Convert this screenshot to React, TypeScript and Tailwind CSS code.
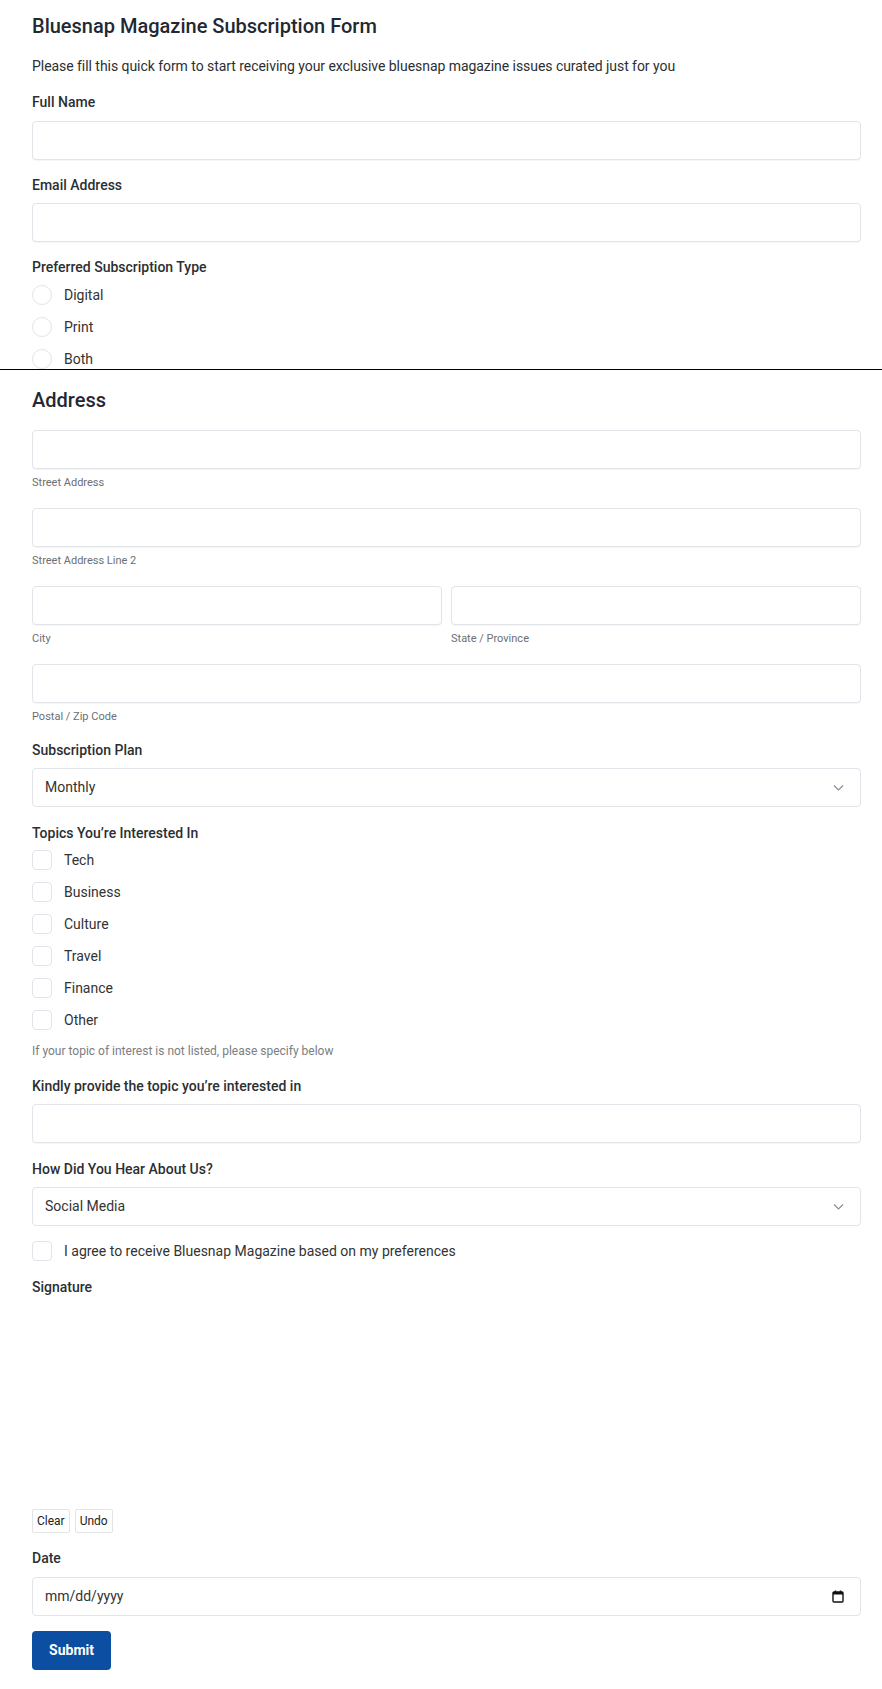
import { useState } from 'react';

const font = { fontFamily: 'Roboto, "Liberation Sans", sans-serif' };

const Label = ({ children, className = '' }: { children: React.ReactNode; className?: string }) => (
  <p className={`text-[14px] leading-5 font-medium text-[#2b2f33] ${className}`}>{children}</p>
);

const TextBox = ({ className = '' }: { className?: string }) => (
  <input
    type="text"
    className={`block w-full h-[39px] rounded-[4px] border border-[#e1e4e8] bg-white px-3 text-[14px] text-[#333] shadow-[0_1px_1px_rgba(0,0,0,0.04)] outline-none ${className}`}
  />
);

const Caption = ({ children }: { children: React.ReactNode }) => (
  <p className="mt-[6px] text-[11px] leading-4 text-[#6b6f73]">{children}</p>
);

const Chevron = () => (
  <svg className="pointer-events-none absolute right-[17px] top-1/2 -translate-y-1/2" width="11" height="7" viewBox="0 0 11 7" fill="none">
    <path d="M1 1l4.5 4.5L10 1" stroke="#8a8f94" strokeWidth="1.2" />
  </svg>
);

const SelectBox = ({ value, options }: { value: string; options: string[] }) => {
  const [v, setV] = useState(value);
  return (
    <div className="relative">
      <select
        value={v}
        onChange={(e) => setV(e.target.value)}
        className="block w-full h-[39px] appearance-none rounded-[4px] border border-[#e1e4e8] bg-white pl-3 pr-8 text-[14px] text-[#333] outline-none"
      >
        {options.map((o) => (
          <option key={o}>{o}</option>
        ))}
      </select>
      <Chevron />
    </div>
  );
};

const Radio = ({ label }: { label: string }) => (
  <label className="flex h-8 items-center gap-3 text-[14px] text-[#333]">
    <span className="h-5 w-5 rounded-full border border-[#e1e4e8] bg-white" />
    {label}
  </label>
);

const Check = ({ label }: { label: string }) => (
  <label className="flex h-8 items-center gap-3 text-[14px] text-[#333]">
    <span className="h-5 w-5 rounded-[4px] border border-[#e1e4e8] bg-white" />
    {label}
  </label>
);

export default function App() {
  return (
    <div className="bg-white pl-8 pr-[21px] pb-[19px] text-[#333]" style={font}>
      {/* Top section, cut off at the divider */}
      <div className="relative -ml-8 -mr-[21px] h-[370px] overflow-hidden border-b border-black pl-8 pr-[21px]">
        <h1 className="pt-3 text-[20px] leading-7 font-medium text-[#1f2933]">
          Bluesnap Magazine Subscription Form
        </h1>
        <p className="mt-4 text-[14px] leading-5 tracking-[-0.05px] text-[#2b2f33]">
          Please fill this quick form to start receiving your exclusive bluesnap magazine issues curated just for you
        </p>

        <Label className="mt-4 mb-[9px]">Full Name</Label>
        <TextBox />

        <Label className="mt-[15px] mb-2">Email Address</Label>
        <TextBox />

        <Label className="mt-[15px]">Preferred Subscription Type</Label>
        <div className="mt-[2px]">
          <Radio label="Digital" />
          <Radio label="Print" />
          <Radio label="Both" />
        </div>
      </div>

      {/* Address */}
      <h2 className="mt-4 text-[20px] leading-7 font-medium text-[#1f2933]">Address</h2>
      <div className="mt-4">
        <TextBox />
        <Caption>Street Address</Caption>
      </div>
      <div className="mt-[17px]">
        <TextBox />
        <Caption>Street Address Line 2</Caption>
      </div>
      <div className="mt-[17px] grid grid-cols-2 gap-[9px]">
        <div>
          <TextBox />
          <Caption>City</Caption>
        </div>
        <div>
          <TextBox />
          <Caption>State / Province</Caption>
        </div>
      </div>
      <div className="mt-[17px]">
        <TextBox />
        <Caption>Postal / Zip Code</Caption>
      </div>

      <Label className="mt-[15px] mb-2">Subscription Plan</Label>
      <SelectBox value="Monthly" options={['Monthly', 'Quarterly', 'Yearly']} />

      <Label className="mt-4">Topics You’re Interested In</Label>
      <div className="mt-px">
        {['Tech', 'Business', 'Culture', 'Travel', 'Finance', 'Other'].map((t) => (
          <Check key={t} label={t} />
        ))}
      </div>
      <p className="mt-[7px] text-[12px] leading-4 text-[#7a7e82]">
        If your topic of interest is not listed, please specify below
      </p>

      <Label className="mt-[17px] mb-2">Kindly provide the topic you’re interested in</Label>
      <TextBox />

      <Label className="mt-4 mb-2">How Did You Hear About Us?</Label>
      <SelectBox value="Social Media" options={['Social Media', 'Friend', 'Search Engine', 'Other']} />

      <div className="mt-[9px]">
        <Check label="I agree to receive Bluesnap Magazine based on my preferences" />
      </div>

      <Label className="mt-[10px]">Signature</Label>
      <div className="h-[212px]" />
      <div className="flex gap-[5px]">
        <button className="h-6 rounded-[2px] border border-[#e1e4e8] bg-white px-[4px] text-[12px] font-normal text-[#222]">
          Clear
        </button>
        <button className="h-6 rounded-[2px] border border-[#e1e4e8] bg-white px-[4px] text-[12px] font-normal text-[#222]">
          Undo
        </button>
      </div>

      <Label className="mt-[15px] mb-[9px]">Date</Label>
      <div className="flex h-[39px] items-center justify-between rounded-[4px] border border-[#e1e4e8] bg-white pl-3 pr-4 text-[14px] text-[#333]">
        <span>mm/dd/yyyy</span>
        <svg width="12" height="13" viewBox="0 0 12 13" fill="none">
          <rect x="1" y="2" width="10" height="10" rx="1" stroke="#111" strokeWidth="1.4" />
          <rect x="1" y="2" width="10" height="2.5" fill="#111" />
          <path d="M3.5 0.5v2M8.5 0.5v2" stroke="#111" strokeWidth="1.4" />
        </svg>
      </div>

      <button className="mt-[15px] h-[39px] w-[79px] rounded-[4px] bg-[#0b4ea2] text-[14px] font-bold text-white">
        Submit
      </button>
    </div>
  );
}
